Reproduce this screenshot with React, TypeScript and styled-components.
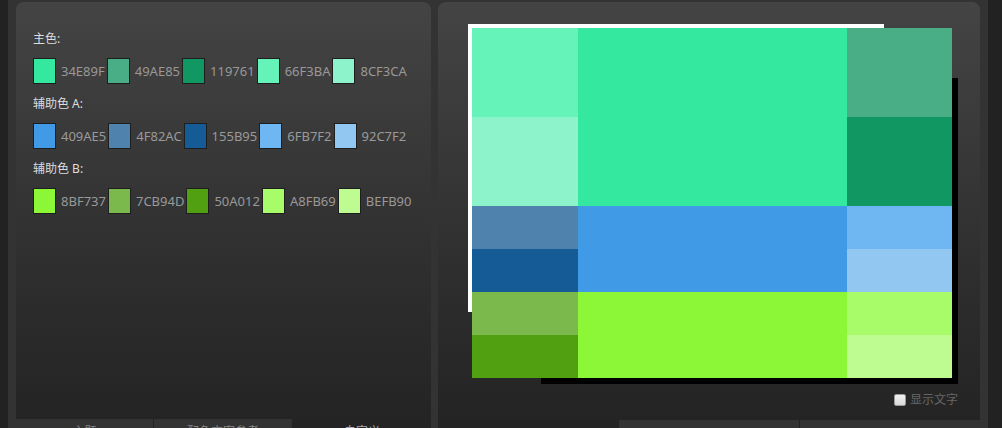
import React from "react";
import styled, { createGlobalStyle } from "styled-components";

const Global = createGlobalStyle`
  html, body { margin: 0; padding: 0; background: #222; overflow: hidden; }
  body { font-family: "Noto Sans", "Noto Sans CJK SC", sans-serif; }
`;

const Shell = styled.div`
  box-sizing: border-box;
  margin-left: 8px;
  width: 980px;
  height: 428px;
  background: #333;
  padding: 2px 8px 0;
  display: flex;
  gap: 7px;
  overflow: hidden;
`;

const Column = styled.div<{ $w: number }>`
  width: ${(p) => p.$w}px;
  display: flex;
  flex-direction: column;
`;

const Panel = styled.div<{ $h: number }>`
  box-sizing: border-box;
  height: ${(p) => p.$h}px;
  border-radius: 8px 8px 0 0;
  background: linear-gradient(to bottom, #444 0%, #3a3a3a 30%, #2e2e2e 65%, #242424 100%);
  position: relative;
`;

const LeftPanel = styled(Panel)`
  padding: 27px 17px 0;
`;

const RightPanel = styled(Panel)`
  padding: 22px 22px 0 30px;
  display: flex;
  flex-direction: column;
`;

const Tabs = styled.div`
  display: flex;
  flex: 1;
  overflow: hidden;
`;

const Tab = styled.div<{ $w: number; $active?: boolean; $sep?: boolean }>`
  width: ${(p) => p.$w}px;
  flex: none;
  background: ${(p) => (p.$active ? "#242424" : "#333")};
  border-right: ${(p) => (p.$sep ? "1px solid #222" : "none")};
  color: ${(p) => (p.$active ? "#aab" : "#888")};
  font-size: 12px;
  line-height: 14px;
  padding-top: 6px;
  text-align: center;
`;

const Section = styled.div`
  margin-bottom: 10px;
`;

const Label = styled.div`
  color: #ddd;
  font-size: 12px;
  line-height: 20px;
  height: 20px;
  margin-bottom: 9px;
`;

const SwatchRow = styled.div`
  display: flex;
  gap: 2px;
  height: 26px;
`;

const Item = styled.div`
  display: flex;
  align-items: center;
  gap: 5px;
`;

const Swatch = styled.div<{ $c: string }>`
  box-sizing: border-box;
  width: 23px;
  height: 26px;
  border: 1px solid #1e1e1e;
  background: ${(p) => p.$c};
`;

const Hex = styled.span`
  color: #999;
  font-size: 13px;
  line-height: 26px;
  font-family: "Noto Sans", sans-serif;
`;

const Stage = styled.div`
  position: relative;
  width: 490px;
  height: 362px;
`;

const Frame = styled.div`
  position: absolute;
  left: 0;
  top: 0;
  width: 416px;
  height: 288px;
  background: #fff;
`;

const Shadow = styled.div`
  position: absolute;
  left: 73px;
  top: 54px;
  width: 417px;
  height: 306px;
  background: #000;
`;

const Grid = styled.div`
  position: absolute;
  left: 4px;
  top: 4px;
  display: grid;
  grid-template-columns: 106px 269px 105px;
  grid-template-rows: 89px 89px 43px 43px 43px 43px;
`;

const Cell = styled.div<{ $c: string; $span?: number }>`
  background: ${(p) => p.$c};
  grid-row: span ${(p) => p.$span ?? 1};
`;

const CheckRow = styled.label`
  margin-top: 6px;
  align-self: flex-end;
  display: flex;
  align-items: center;
  gap: 4px;
  color: #666;
  font-size: 12px;
  line-height: 16px;
`;

const Box = styled.span`
  box-sizing: border-box;
  width: 12px;
  height: 12px;
  border: 1px solid #999;
  border-radius: 2px;
  background: linear-gradient(#f0f0f0, #d8d8d8);
`;

const groups = [
  { label: "主色:", colors: ["34E89F", "49AE85", "119761", "66F3BA", "8CF3CA"] },
  { label: "辅助色 A:", colors: ["409AE5", "4F82AC", "155B95", "6FB7F2", "92C7F2"] },
  { label: "辅助色 B:", colors: ["8BF737", "7CB94D", "50A012", "A8FB69", "BEFB90"] },
];

export default function App() {
  return (
    <>
      <Global />
      <Shell>
        <Column $w={415}>
          <LeftPanel $h={417}>
            {groups.map((g) => (
              <Section key={g.label}>
                <Label>{g.label}</Label>
                <SwatchRow>
                  {g.colors.map((c) => (
                    <Item key={c}>
                      <Swatch $c={"#" + c} />
                      <Hex>{c}</Hex>
                    </Item>
                  ))}
                </SwatchRow>
              </Section>
            ))}
          </LeftPanel>
          <Tabs>
            <Tab $w={137} $sep>主题</Tab>
            <Tab $w={138}>配色方案参考</Tab>
            <Tab $w={140} $active>自定义</Tab>
          </Tabs>
        </Column>
        <Column $w={542}>
          <RightPanel $h={418}>
            <Stage>
              <Frame />
              <Shadow />
              <Grid>
                <Cell $c="#66F3BA" />
                <Cell $c="#34E89F" $span={2} />
                <Cell $c="#49AE85" />
                <Cell $c="#8CF3CA" />
                <Cell $c="#119761" />
                <Cell $c="#4F82AC" />
                <Cell $c="#409AE5" $span={2} />
                <Cell $c="#6FB7F2" />
                <Cell $c="#155B95" />
                <Cell $c="#92C7F2" />
                <Cell $c="#7CB94D" />
                <Cell $c="#8BF737" $span={2} />
                <Cell $c="#A8FB69" />
                <Cell $c="#50A012" />
                <Cell $c="#BEFB90" />
              </Grid>
            </Stage>
            <CheckRow>
              <Box />
              显示文字
            </CheckRow>
          </RightPanel>
          <Tabs>
            <Tab $w={181} $active />
            <Tab $w={180} $sep />
            <Tab $w={181} />
          </Tabs>
        </Column>
      </Shell>
    </>
  );
}
